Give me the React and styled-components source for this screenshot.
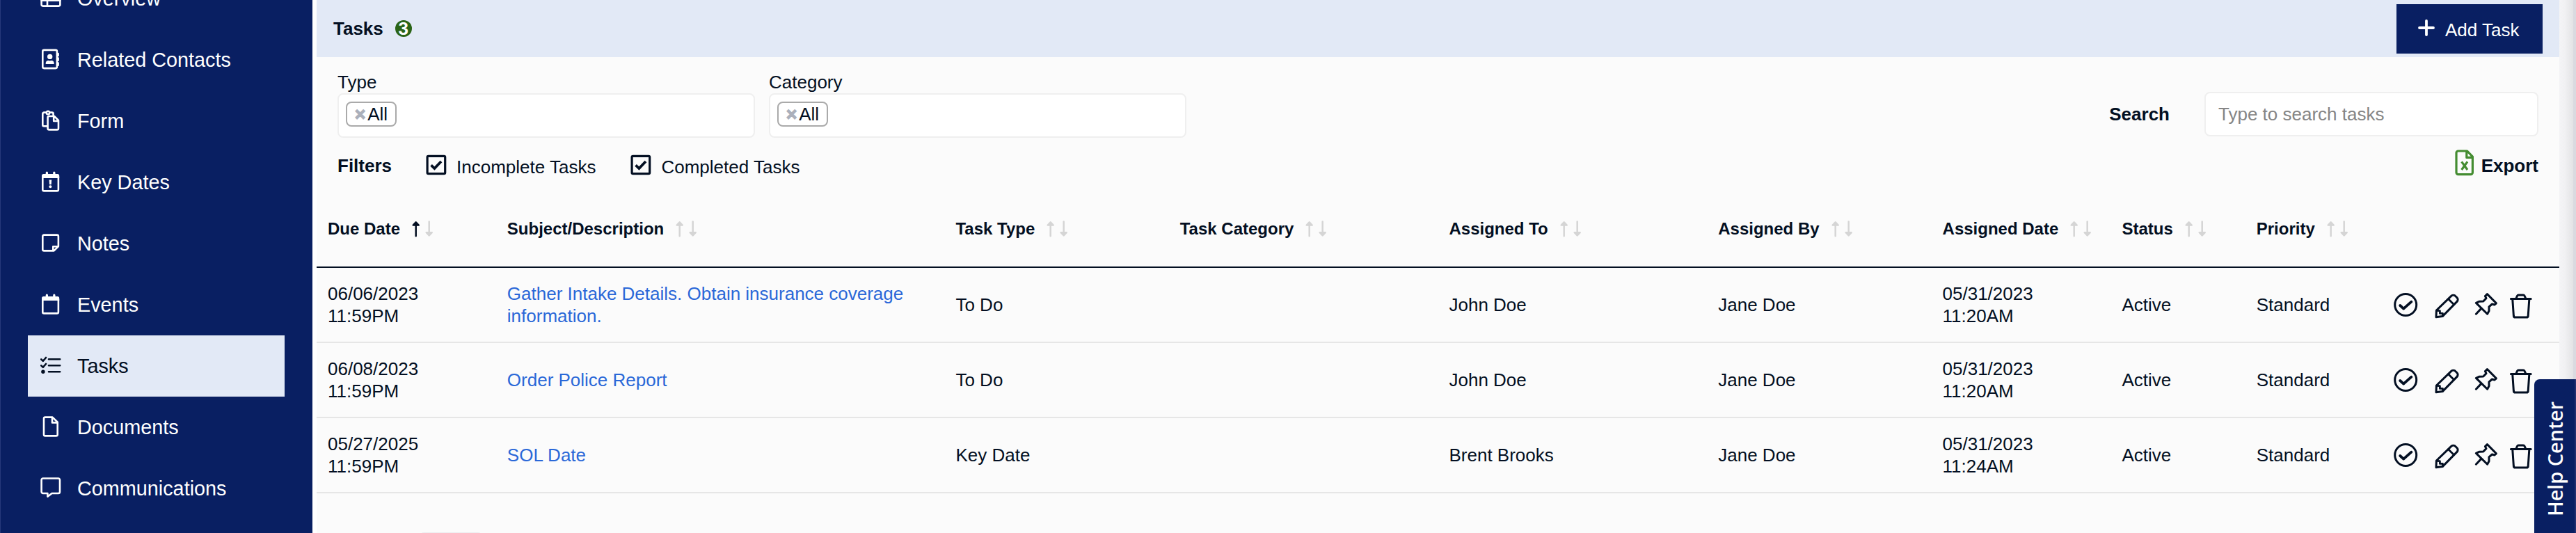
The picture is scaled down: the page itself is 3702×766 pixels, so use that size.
import React from 'react';
import styled, { createGlobalStyle } from 'styled-components';

const NAVY = '#091f62';
const INK = '#030f22';
const PALE = '#e2e9f6';

const navItems = [
  { label: 'Overview', icon: 'overview' },
  { label: 'Related Contacts', icon: 'contacts' },
  { label: 'Form', icon: 'form' },
  { label: 'Key Dates', icon: 'keyDates' },
  { label: 'Notes', icon: 'notes' },
  { label: 'Events', icon: 'events' },
  { label: 'Tasks', icon: 'tasks' },
  { label: 'Documents', icon: 'documents' },
  { label: 'Communications', icon: 'communications' },
];

const columns = [
  'Due Date',
  'Subject/Description',
  'Task Type',
  'Task Category',
  'Assigned To',
  'Assigned By',
  'Assigned Date',
  'Status',
  'Priority',
];

const tasks = [
  {
    due: ['06/06/2023', '11:59PM'],
    subject: 'Gather Intake Details. Obtain insurance coverage information.',
    type: 'To Do',
    category: '',
    to: 'John Doe',
    by: 'Jane Doe',
    assigned: ['05/31/2023', '11:20AM'],
    status: 'Active',
    priority: 'Standard',
  },
  {
    due: ['06/08/2023', '11:59PM'],
    subject: 'Order Police Report',
    type: 'To Do',
    category: '',
    to: 'John Doe',
    by: 'Jane Doe',
    assigned: ['05/31/2023', '11:20AM'],
    status: 'Active',
    priority: 'Standard',
  },
  {
    due: ['05/27/2025', '11:59PM'],
    subject: 'SOL Date',
    type: 'Key Date',
    category: '',
    to: 'Brent Brooks',
    by: 'Jane Doe',
    assigned: ['05/31/2023', '11:24AM'],
    status: 'Active',
    priority: 'Standard',
  },
];

const calendarFrame = (
  <>
    <path d="M3.3 8V26.4a2 2 0 0 0 2 2H23.9a2 2 0 0 0 2-2V8" />
    <path
      d="M2 10V6.5A2.5 2.5 0 0 1 4.5 4H7.7V2.2a1.6 1.6 0 0 1 3.3 0V4h7.2V2.2a1.6 1.6 0 0 1 3.3 0V4h3.2a2.5 2.5 0 0 1 2.5 2.5V10z"
      fill="currentColor"
      stroke="none"
    />
  </>
);

const navIcons = {
  overview: (
    <>
      <rect x="1.6" y="4" width="26.8" height="22.6" rx="2" />
      <path d="M1.6 18.8H28.4M10 11V26.6M1.6 11H28.4" />
    </>
  ),
  contacts: (
    <>
      <rect x="3.3" y="1.9" width="20.6" height="26.2" rx="2" />
      <path d="M25.6 7v3M25.6 13.5v3.3M25.6 20.5v3.2" />
      <g fill="currentColor" stroke="none">
        <circle cx="13.7" cy="11.4" r="3.7" />
        <path d="M7.7 22v-1.2c0-2.2 1.6-3.8 3.8-3.8h.4c1.2.5 2.4.5 3.6 0h.4c2.2 0 3.8 1.6 3.8 3.8V22z" />
      </g>
    </>
  ),
  form: (
    <>
      <path d="M9.6 23.4H5.3a2 2 0 0 1-2-2V5.6a2 2 0 0 1 2-2H8M14 3.6h2.6a2 2 0 0 1 2 2V7.6" />
      <circle cx="11" cy="4" r="2.2" />
      <path d="M10.6 11a2 2 0 0 1 2-2H20l6 6v11.4a2 2 0 0 1-2 2H12.6a2 2 0 0 1-2-2zM19.2 9v7H26" />
    </>
  ),
  keyDates: (
    <>
      {calendarFrame}
      <g fill="currentColor" stroke="none">
        <path d="M12.6 12.6h3.6l-.5 6.6h-2.6z" />
        <circle cx="14.4" cy="22.3" r="2" />
      </g>
    </>
  ),
  notes: (
    <path d="M5.3 3.6H23.9a2 2 0 0 1 2 2V20l-6.4 6.4H5.3a2 2 0 0 1-2-2V5.6a2 2 0 0 1 2-2zM18.3 26.4V20.2H25.9" />
  ),
  events: calendarFrame,
  tasks: (
    <>
      <path d="M1.2 6.4 3.8 8.8 8 4M1.2 15.4 3.8 17.8 8 13M12 6.2H28.2M12 15.3H28.2M12 24.2H28.2" />
      <circle cx="3.9" cy="24.3" r="2.7" fill="currentColor" stroke="none" />
    </>
  ),
  documents: (
    <path d="M5 3.6a2 2 0 0 1 2-2H17.4l7.3 7.2V26.4a2 2 0 0 1-2 2H7a2 2 0 0 1-2-2zM17 1.6V9.4H24.7" />
  ),
  communications: (
    <path d="M3.8 1.5H25.8a2.2 2.2 0 0 1 2.2 2.2V20.8a2.2 2.2 0 0 1-2.2 2.2H16.6l-6.2 4.6V23H3.8a2.2 2.2 0 0 1-2.2-2.2V3.7a2.2 2.2 0 0 1 2.2-2.2z" />
  ),
};

const SortArrows = ({ active }) => (
  <Arrows viewBox="0 0 32 24">
    <g stroke={active ? INK : '#d5d5d5'} fill={active ? INK : '#d5d5d5'}>
      <path d="M6.7 2.4 10.7 6.6H2.7zM6.7 4V22.2" />
    </g>
    <g stroke="#d5d5d5" fill="#d5d5d5">
      <path d="M25.7 21.4 21.7 17.2H29.7zM25.7 19.6V1.6" />
    </g>
  </Arrows>
);

const CheckBox = () => (
  <Box viewBox="0 0 30 30">
    <rect x="2.1" y="2.3" width="25.6" height="25.4" rx="1.6" strokeWidth="3.2" />
    <path d="M7.6 15.4 12.4 20 22 10" strokeWidth="3.8" />
  </Box>
);

const TaskActions = () => (
  <Actions>
    <ActionIcon $width={45} viewBox="0 0 45 38">
      <circle cx="18.2" cy="18" r="15.5" />
      <path d="M10.2 19 15.2 23.6 26.4 13.7" strokeWidth="3.8" />
    </ActionIcon>
    <ActionIcon $width={43} viewBox="0 0 43 38">
      <path d="M3.4 26 25 5.2a4 4 0 0 1 5.4 0l2.6 2.6a4 4 0 0 1 0 5.6L12.2 34.6 3 35.8z" />
      <path d="M20.6 9.8 28.4 17.6M3.8 26.4 8.4 26.6V30.4H12.4L12.6 34" strokeWidth="2.8" />
    </ActionIcon>
    <ActionIcon $width={36} viewBox="0 0 36 38">
      <path d="M19.4 2.6 32.4 15.8 30 18 26.4 17 22 20.8V26.8L19.6 31.2 3.4 15.4 8.2 13.2 13.8 13 18 8.6 16.4 5.6z" />
      <path d="M10.8 23.4 3.4 31.2" />
    </ActionIcon>
    <ActionIcon $width={34} viewBox="0 0 34 38">
      <path d="M3.4 9.6H32.2M10.8 9.2 12.6 5.2a2 2 0 0 1 1.8-1.2h6.8a2 2 0 0 1 1.8 1.2l1.8 4M5.8 10.4 7.4 34a2.2 2.2 0 0 0 2.2 2H26a2.2 2.2 0 0 0 2.2-2L29.8 10.4" />
    </ActionIcon>
  </Actions>
);

const FilterSelect = ({ label }) => (
  <Field>
    <FieldLabel>{label}</FieldLabel>
    <SelectBox>
      <Chip>
        <ChipRemove>×</ChipRemove>
        All
      </Chip>
    </SelectBox>
  </Field>
);

const App = () => (
  <>
    <GlobalStyle />
    <Page>
      <Sidebar>
        {navItems.map((item) => (
          <NavItem key={item.label} $active={item.label === 'Tasks'}>
            <NavIcon viewBox="0 0 30 30">{navIcons[item.icon]}</NavIcon>
            {item.label}
          </NavItem>
        ))}
      </Sidebar>

      <Main>
        <Header>
          <Title>Tasks</Title>
          <Count>3</Count>
          <AddButton>
            <PlusIcon viewBox="0 0 24 24">
              <path d="M12 2V22M2 12H22" />
            </PlusIcon>
            Add Task
          </AddButton>
        </Header>

        <Toolbar>
          <FilterSelect label="Type" />
          <FilterSelect label="Category" />
          <Search>
            <Strong>Search</Strong>
            <SearchInput placeholder="Type to search tasks" />
          </Search>
        </Toolbar>

        <Filters>
          <Strong>Filters</Strong>
          <Option $indent={49}>
            <CheckBox />
            <OptionText>Incomplete Tasks</OptionText>
          </Option>
          <Option $indent={50}>
            <CheckBox />
            <OptionText>Completed Tasks</OptionText>
          </Option>
          <Export>
            <ExcelIcon viewBox="0 0 28 38">
              <path d="M2 4.6a2.6 2.6 0 0 1 2.6-2.6H17.6l7.8 8.2V33a2.6 2.6 0 0 1-2.6 2.6H4.6A2.6 2.6 0 0 1 2 33zM16.8 2V11.4H25.4" />
              <path d="M9.6 17.4 18 29M18 17.4 9.6 29" />
            </ExcelIcon>
            <Strong>Export</Strong>
          </Export>
        </Filters>

        <HeadRow>
          {columns.map((name) => (
            <HeadCell key={name}>
              {name}
              <SortArrows active={name === 'Due Date'} />
            </HeadCell>
          ))}
        </HeadRow>
        {tasks.map((task) => (
          <Row key={task.subject}>
            <Cell>{task.due[0]}<br />{task.due[1]}</Cell>
            <Cell><TaskLink>{task.subject}</TaskLink></Cell>
            <Cell>{task.type}</Cell>
            <Cell>{task.category}</Cell>
            <Cell>{task.to}</Cell>
            <Cell>{task.by}</Cell>
            <Cell>{task.assigned[0]}<br />{task.assigned[1]}</Cell>
            <Cell>{task.status}</Cell>
            <Cell>{task.priority}</Cell>
            <TaskActions />
          </Row>
        ))}
        <PagerEdge />
      </Main>

      <Gutter />
      <HelpTab>
        <HelpText>Help Center</HelpText>
      </HelpTab>
    </Page>
  </>
);

const GlobalStyle = createGlobalStyle`
  * {
    box-sizing: border-box;
  }

  body {
    margin: 0;
    background: #fff;
    color: ${INK};
    font-family: "Liberation Sans", Arial, sans-serif;
    font-size: 26px;
    line-height: 32px;
  }
`;

const Page = styled.div`
  position: relative;
  display: flex;
  width: 3702px;
  height: 766px;
  overflow: hidden;
`;

/* the menu is scrolled, so the first item is cut by the top edge */
const Sidebar = styled.nav`
  display: flex;
  flex-direction: column;
  flex: none;
  width: 449px;
  height: 812px;
  margin-top: -46px;
  padding: 0 40px 0 39px;
  border-left: 1px solid #26397a;
  background: ${NAVY};
`;

const NavItem = styled.a`
  display: flex;
  align-items: center;
  gap: 23px;
  flex: none;
  height: 88px;
  padding-left: 18px;
  font-size: 28.8px;
  color: ${(p) => (p.$active ? INK : '#fff')};
  background: ${(p) => (p.$active ? PALE : 'transparent')};
`;

const NavIcon = styled.svg`
  flex: none;
  width: 30px;
  height: 30px;
  margin-bottom: 2px;
  fill: none;
  stroke: currentColor;
  stroke-width: 2.6;
  stroke-linecap: round;
  stroke-linejoin: round;
`;

const Main = styled.main`
  display: flex;
  flex-direction: column;
  flex: none;
  width: 3223px;
  margin-left: 6px;
  background: #fbfbfb;
`;

const Header = styled.header`
  display: flex;
  align-items: center;
  flex: none;
  height: 82px;
  padding: 0 24px;
  background: ${PALE};
`;

const Title = styled.h1`
  margin: 0;
  font-size: 26px;
  font-weight: bold;
`;

const Count = styled.span`
  display: flex;
  align-items: center;
  justify-content: center;
  width: 24px;
  height: 24px;
  margin-left: 17px;
  border-radius: 50%;
  background: #2a6417;
  color: #fff;
  font-weight: bold;
`;

const AddButton = styled.button`
  display: flex;
  align-items: center;
  gap: 15px;
  width: 210px;
  height: 71px;
  margin-left: auto;
  padding: 3px 0 0 31px;
  border: 0;
  background: ${NAVY};
  color: #fff;
  font: inherit;
`;

const PlusIcon = styled.svg`
  width: 24px;
  height: 24px;
  margin-bottom: 6px;
  fill: none;
  stroke: currentColor;
  stroke-width: 3.8;
  stroke-linecap: round;
`;

const Toolbar = styled.div`
  display: flex;
  align-items: flex-end;
  gap: 20px;
  flex: none;
  padding: 20px 30px 0;
`;

const Field = styled.div`
  width: 600px;
`;

const FieldLabel = styled.div`
  height: 32px;
`;

const SelectBox = styled.div`
  display: flex;
  height: 64px;
  padding: 10px;
  border: 2px solid #efefef;
  border-radius: 8px;
  background: #fff;
`;

const Chip = styled.span`
  display: flex;
  align-items: center;
  gap: 3px;
  height: 36px;
  padding: 0 11px;
  border: 2px solid #aaa;
  border-radius: 8px;
`;

const ChipRemove = styled.span`
  color: #abb0bb;
  font-weight: bold;
  -webkit-text-stroke: 1.5px #abb0bb;
`;

const Search = styled.label`
  display: flex;
  align-items: center;
  gap: 50px;
  margin: 0 0 2px auto;
`;

const Strong = styled.span`
  font-weight: bold;
`;

const SearchInput = styled.input`
  width: 480px;
  height: 64px;
  padding: 0 18px;
  border: 2px solid #efefef;
  border-radius: 8px;
  background: #fff;
  font: inherit;

  &::placeholder {
    color: #858585;
    opacity: 1;
  }
`;

const Filters = styled.div`
  display: flex;
  align-items: center;
  flex: none;
  height: 40px;
  margin-top: 20px;
  padding: 0 30px;
`;

const Option = styled.label`
  display: flex;
  align-items: center;
  gap: 14px;
  margin-left: ${(p) => p.$indent}px;
`;

const OptionText = styled.span`
  padding-top: 4px;
`;

const Box = styled.svg`
  width: 30px;
  height: 30px;
  margin-bottom: 2px;
  fill: none;
  stroke: ${INK};
`;

const Export = styled.div`
  display: flex;
  align-items: center;
  gap: 10px;
  margin-left: auto;
`;

const ExcelIcon = styled.svg`
  width: 28px;
  height: 38px;
  margin-bottom: 8px;
  fill: none;
  stroke: #448c31;
  stroke-width: 3.2;
  stroke-linejoin: round;
`;

const Row = styled.div`
  display: grid;
  grid-template-columns: 8fr 20fr 10fr 12fr 12fr 10fr 8fr 6fr 6fr 8fr;
  align-items: center;
  flex: none;
  height: 108px;
  border-bottom: 2px solid #e6e6e6;
`;

const HeadRow = styled(Row)`
  height: 111px;
  margin-top: 16px;
  border-bottom-color: ${INK};
`;

const Cell = styled.div`
  min-width: 0;
  padding: 0 16px;
`;

const HeadCell = styled(Cell)`
  display: flex;
  align-items: center;
  padding-right: 0;
  font-size: 24px;
  font-weight: bold;
  white-space: nowrap;
`;

const Arrows = styled.svg`
  flex: none;
  width: 32px;
  height: 24px;
  margin-left: 16px;
  stroke-width: 2.5;
  stroke-linecap: round;
  stroke-linejoin: round;
`;

const TaskLink = styled.a`
  color: #2a68d8;
`;

const Actions = styled.div`
  display: flex;
  align-items: center;
  gap: 14px;
  padding-left: 19px;
`;

const ActionIcon = styled.svg`
  flex: none;
  width: ${(p) => p.$width}px;
  height: 38px;
  margin-top: 2px;
  fill: none;
  stroke: ${INK};
  stroke-width: 3;
  stroke-linecap: round;
  stroke-linejoin: round;
`;

/* top of the pager, which starts right at the fold */
const PagerEdge = styled.div`
  width: 90px;
  height: 6px;
  margin: auto 0 -5px 148px;
  border-radius: 6px 6px 0 0;
  background: #ededf0;
`;

const Gutter = styled.div`
  flex: 1;
  border-right: 4px solid #dadae0;
  background: linear-gradient(to right, #f4f4f6, #f1f1f3 40%, #e3e3e5);
`;

const HelpTab = styled.div`
  position: absolute;
  right: 0;
  bottom: 0;
  display: flex;
  justify-content: center;
  width: 60px;
  height: 221px;
  padding-top: 31px;
  border-radius: 8px 0 0 0;
  background: linear-gradient(to right, ${NAVY} 58px, #24306f 58px);
`;

const HelpText = styled.span`
  writing-mode: vertical-rl;
  transform: rotate(180deg);
  height: 166px;
  color: #fff;
  font-family: "Noto Sans", "Open Sans", sans-serif;
  font-size: 29px;
  font-weight: 500;
  white-space: nowrap;
`;

export default App;
